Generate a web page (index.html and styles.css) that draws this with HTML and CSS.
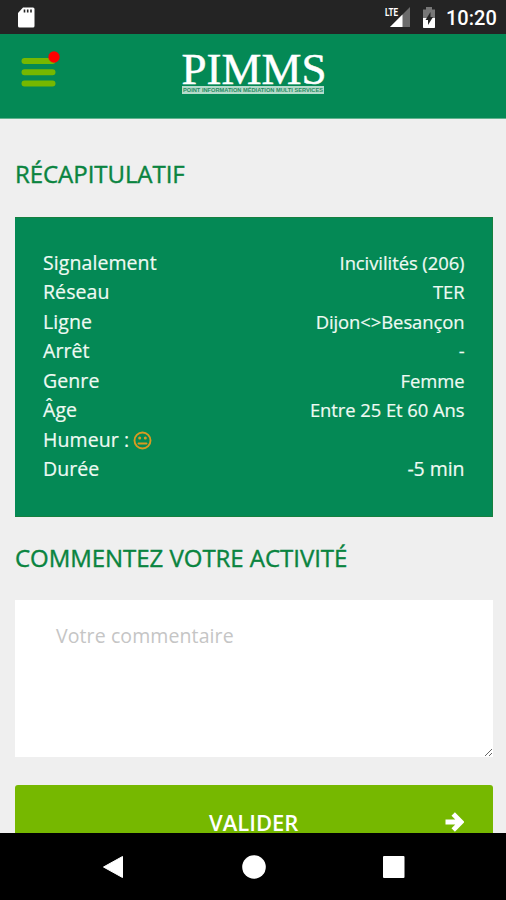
FILE: index.html
```html
<!DOCTYPE html>
<html lang="fr">
<head>
<meta charset="utf-8">
<meta name="viewport" content="width=device-width">
<title>Récapitulatif</title>
<link rel="stylesheet" href="styles.css">
</head>
<body>
<div class="status">
  <svg class="sd" width="18" height="22" viewBox="0 0 18 22"><path d="M6 .5h10q1.500 0 1.500 1.500v17q0 1.500-1.500 1.500H2.500Q1 20.500 1 19V6z" fill="#fff"/><path d="M7.500 2.500v3M10.700 2.500v3M14 2.500v3" stroke="#242424" stroke-width="1.600"/></svg>
  <svg class="signal" width="28" height="24" viewBox="0 0 28 24"><path d="M26 3v20H6z" fill="#6b6b6b"/><path d="M18.500 10.500V23H6z" fill="#fff"/><text x="1" y="12" class="lte" textLength="13" lengthAdjust="spacingAndGlyphs">LTE</text></svg>
  <svg class="battery" width="14" height="22" viewBox="0 0 14 22"><path d="M4 0h6v2.500h3V21H1V2.500h3z" fill="#777"/><path d="M1 11h12v9q0 1-1 1H2q-1 0-1-1z" fill="#fff"/><path d="M8.500 5v5H11l-5 8v-5H3.500z" fill="#242424"/></svg>
  <span class="clock">10:20</span>
</div>
<header class="header">
  <svg class="menu" width="42" height="40" viewBox="0 0 42 40"><path d="M4.500 13h28M4.500 24.200h28M4.500 35.500h28" stroke="#76b800" stroke-width="6" stroke-linecap="round"/><circle cx="34" cy="9" r="5.700" fill="#f00"/></svg>
  <svg class="logo" width="150" height="54" viewBox="0 0 150 54"><text x="2.500" y="35.500" class="brand" textLength="145" lengthAdjust="spacingAndGlyphs">PIMMS</text><path d="M3 38h142v8H3z" fill="#b5dbcb"/><text x="4" y="44.200" class="tagline" textLength="140" lengthAdjust="spacingAndGlyphs">POINT INFORMATION MÉDIATION MULTI SERVICES</text></svg>
</header>
<main class="content">
  <h2 class="title title-recap">RÉCAPITULATIF</h2>
  <dl class="card">
    <div class="row"><dt>Signalement</dt><dd>Incivilités (206)</dd></div>
    <div class="row"><dt>Réseau</dt><dd>TER</dd></div>
    <div class="row"><dt>Ligne</dt><dd>Dijon&lt;&gt;Besançon</dd></div>
    <div class="row"><dt>Arrêt</dt><dd>-</dd></div>
    <div class="row"><dt>Genre</dt><dd>Femme</dd></div>
    <div class="row"><dt>Âge</dt><dd>Entre 25 Et 60 Ans</dd></div>
    <div class="row"><dt>Humeur : <svg class="mood" width="19" height="19" viewBox="0 0 19 19"><g fill="none" stroke="#d99a20" stroke-width="1.900"><circle cx="9.500" cy="9.500" r="8"/><path d="M5.500 12.500h8" stroke-linecap="round"/></g><circle cx="6.700" cy="7" r="1.500" fill="#d99a20"/><circle cx="12.300" cy="7" r="1.500" fill="#d99a20"/></svg></dt><dd></dd></div>
    <div class="row"><dt>Durée</dt><dd class="duration">-5 min</dd></div>
  </dl>
  <h2 class="title title-comment">COMMENTEZ VOTRE ACTIVITÉ</h2>
  <textarea class="comment" placeholder="Votre commentaire"></textarea>
  <button class="submit"><span class="submit-label">VALIDER</span><svg class="arrow" width="20" height="22" viewBox="0 0 20 22"><path d="M1.500 11H16M9.200 3l8 8-8 8" fill="none" stroke="#fff" stroke-width="4.800"/></svg></button>
</main>
<nav class="nav">
  <svg width="22" height="26" viewBox="0 0 22 26"><path d="M20.500 2.500v21L1.500 13z" fill="#fff" stroke="#fff" stroke-linejoin="round"/></svg>
  <svg width="24" height="24" viewBox="0 0 24 24"><circle cx="12" cy="12" r="11.800" fill="#fff"/></svg>
  <svg width="22" height="22" viewBox="0 0 22 22"><rect width="21.500" height="22" rx="1" fill="#fff"/></svg>
</nav>
</body>
</html>
```
FILE: styles.css
```css
* { box-sizing: border-box; }
body {
  margin: 0;
  height: 900px;
  overflow: hidden;
  display: flex;
  flex-direction: column;
  background: #efefef;
  font-family: "Open Sans", sans-serif;
}
.status {
  flex: none;
  height: 34px;
  display: flex;
  align-items: flex-start;
  background: #242424;
  padding: 7px 10px 0 17px;
}
.sd { margin-right: auto; }
.signal { margin-top: -3px; margin-right: 10px; }
.lte { font: bold 11px Roboto, sans-serif; fill: #fff; }
.battery { margin-right: 10px; }
.clock { font: 500 20px/22px Roboto, sans-serif; color: #fff; width: 50px; }
.header {
  flex: none;
  height: 85px;
  background: #048955;
  border-bottom: 1px solid #62b28e;
  display: flex;
  padding: 14px 0 0 20px;
}
.menu { margin-right: 117px; }
.logo { overflow: visible; }
.brand { font: 45px "Liberation Serif", serif; fill: #fff; stroke: #fff; stroke-width: .5px; }
.tagline { font: bold 5.5px "Liberation Sans", sans-serif; fill: #258c61; }
.content { flex: 1; min-height: 0; overflow: hidden; padding: 0 13px 0 15px; }
.title {
  margin: 0;
  font-size: 24px;
  line-height: 34px;
  font-weight: 400;
  color: #0a843f;
  -webkit-text-stroke: .4px #0a843f;
  white-space: nowrap;
}
.title-recap { padding-top: 38px; letter-spacing: -.05px; }
.title-comment { padding-top: 24px; letter-spacing: -.04px; }
.card {
  margin: 26px 0 0;
  height: 300px;
  padding: 29.5px 27.5px 0 28px;
  background: #048955;
  border: 1px solid #16803f;
  border-width: 1px 1px 1px 0;
  color: #effaf3;
  -webkit-text-stroke: .2px #effaf3;
}
.row { display: flex; justify-content: space-between; height: 29.5px; line-height: 29.5px; }
dt { font-size: 19.5px; letter-spacing: .08px; }
dd { margin: 0; font-size: 18.4px; letter-spacing: -.05px; }
.duration { font-size: 19.5px; }
.mood { vertical-align: -3px; margin-left: -1px; }
.comment {
  display: block;
  width: 100%;
  height: 157px;
  margin: 25px 0 28px;
  padding: 21px 41px;
  border: 0;
  background: #fff;
  font: 19.5px/30px "Open Sans", sans-serif;
  letter-spacing: .1px;
  resize: vertical;
}
.comment::placeholder { color: #c5c5c5; }
.submit {
  display: flex;
  width: 100%;
  height: 73px;
  border: 0;
  border-radius: 3px;
  background: #76b800;
  color: #fff;
  padding: 0 29px 0 0;
  align-items: center;
  font: 600 22px/30px "Open Sans", sans-serif;
}
.submit-label { margin-left: 194px; margin-right: auto; letter-spacing: 0; }
.nav {
  flex: none;
  height: 67px;
  background: #000;
  display: flex;
  align-items: center;
  justify-content: space-between;
  padding: 0 101px 0 102px;
}
```
